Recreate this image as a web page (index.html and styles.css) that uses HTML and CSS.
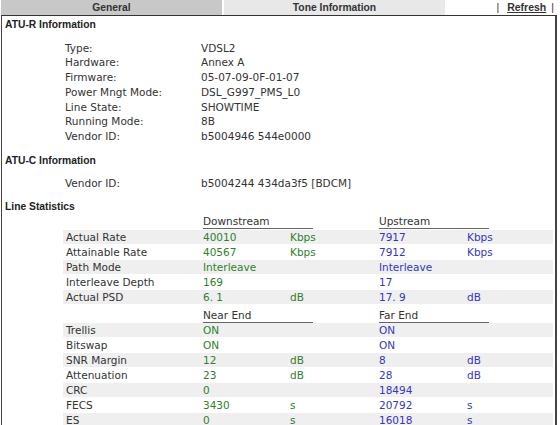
FILE: index.html
```html
<!DOCTYPE html>
<html>
<head>
<meta charset="utf-8">
<link rel="stylesheet" href="styles.css">
</head>
<body>
<div class="tabs">
  <div class="tab tab-active">General</div>
  <div class="tab tab-other">Tone Information</div>
  <div class="links"><span class="sep">|</span><a class="refresh" href="#">Refresh</a><span class="sep">|</span></div>
</div>
<div class="panel">
  <h3 class="sec">ATU-R Information</h3>
  <div class="info">
    <div class="irow"><span class="ilabel">Type:</span><span>VDSL2</span></div>
    <div class="irow"><span class="ilabel">Hardware:</span><span>Annex A</span></div>
    <div class="irow"><span class="ilabel">Firmware:</span><span>05-07-09-0F-01-07</span></div>
    <div class="irow"><span class="ilabel">Power Mngt Mode:</span><span>DSL_G997_PMS_L0</span></div>
    <div class="irow"><span class="ilabel">Line State:</span><span>SHOWTIME</span></div>
    <div class="irow"><span class="ilabel">Running Mode:</span><span>8B</span></div>
    <div class="irow"><span class="ilabel">Vendor ID:</span><span>b5004946 544e0000</span></div>
  </div>
  <h3 class="sec sec-c">ATU-C Information</h3>
  <div class="info info-c">
    <div class="irow"><span class="ilabel">Vendor ID:</span><span>b5004244 434da3f5 [BDCM]</span></div>
  </div>
  <h3 class="sec sec-l">Line Statistics</h3>
  <div class="stats">
    <div class="srow head"><span></span><span class="colh"><span class="uline">Downstream</span></span><span class="colh"><span class="uline">Upstream</span></span></div>
    <div class="srow shade"><span class="slabel">Actual Rate</span><span class="dn">40010</span><span class="dn">Kbps</span><span class="up">7917</span><span class="up">Kbps</span></div>
    <div class="srow"><span class="slabel">Attainable Rate</span><span class="dn">40567</span><span class="dn">Kbps</span><span class="up">7912</span><span class="up">Kbps</span></div>
    <div class="srow shade"><span class="slabel">Path Mode</span><span class="dn">Interleave</span><span class="dn"></span><span class="up">Interleave</span><span class="up"></span></div>
    <div class="srow"><span class="slabel">Interleave Depth</span><span class="dn">169</span><span class="dn"></span><span class="up">17</span><span class="up"></span></div>
    <div class="srow shade"><span class="slabel">Actual PSD</span><span class="dn">6. 1</span><span class="dn">dB</span><span class="up">17. 9</span><span class="up">dB</span></div>
    <div class="srow head head2"><span></span><span class="colh"><span class="uline">Near End</span></span><span class="colh"><span class="uline">Far End</span></span></div>
    <div class="srow shade"><span class="slabel">Trellis</span><span class="dn">ON</span><span class="dn"></span><span class="up">ON</span><span class="up"></span></div>
    <div class="srow"><span class="slabel">Bitswap</span><span class="dn">ON</span><span class="dn"></span><span class="up">ON</span><span class="up"></span></div>
    <div class="srow shade"><span class="slabel">SNR Margin</span><span class="dn">12</span><span class="dn">dB</span><span class="up">8</span><span class="up">dB</span></div>
    <div class="srow"><span class="slabel">Attenuation</span><span class="dn">23</span><span class="dn">dB</span><span class="up">28</span><span class="up">dB</span></div>
    <div class="srow shade"><span class="slabel">CRC</span><span class="dn">0</span><span class="dn"></span><span class="up">18494</span><span class="up"></span></div>
    <div class="srow"><span class="slabel">FECS</span><span class="dn">3430</span><span class="dn">s</span><span class="up">20792</span><span class="up">s</span></div>
    <div class="srow shade"><span class="slabel">ES</span><span class="dn">0</span><span class="dn">s</span><span class="up">16018</span><span class="up">s</span></div>
  </div>
</div>
</body>
</html>
```

FILE: styles.css
```css
html, body {
  margin: 0;
  padding: 0;
  background: #ffffff;
}
body {
  width: 560px;
  height: 425px;
  overflow: hidden;
  font-family: "DejaVu Sans", Verdana, sans-serif;
  font-size: 10.5px;
  color: #333333;
}
.tabs {
  display: flex;
  height: 15px;
  align-items: stretch;
}
.tab {
  width: 221px;
  font-family: "Liberation Sans", Arial, sans-serif;
  font-weight: bold;
  font-size: 10.3px;
  line-height: 15px;
  text-align: center;
  color: #333333;
}
.tab-active {
  margin-left: 1px;
  background: #c8c8c8;
}
.tab-other {
  margin-left: 2px;
  background: #e8e8e8;
}
.links {
  flex: 1;
  display: flex;
  justify-content: flex-end;
  align-items: center;
  padding-right: 6px;
  font-family: "Liberation Sans", Arial, sans-serif;
  font-size: 10.5px;
  line-height: 15px;
  color: #333333;
}
.sep {
  font-weight: normal;
}
.refresh {
  font-weight: bold;
  color: #333333;
  text-decoration: underline;
  margin: 0 5px 0 8px;
}
.panel {
  margin-left: 1px;
  width: 553px;
  border-top: 1px solid #333333;
  border-left: 1px solid #444444;
  border-right: 2px solid #444444;
  padding-top: 2px;
  height: 420px;
}
.sec {
  margin: 0 0 0 3px;
  font-family: "Liberation Sans", Arial, sans-serif;
  font-weight: bold;
  font-size: 10.3px;
  line-height: 14px;
  color: #222222;
}
.sec-c {
  margin-top: 10px;
}
.sec-l {
  margin-top: 9.7px;
}
.info {
  margin: 8.5px 0 0 63px;
}
.info-c {
  margin-top: 7.5px;
}
.irow {
  display: flex;
  height: 14.8px;
  line-height: 14.8px;
  white-space: nowrap;
}
.ilabel {
  width: 136px;
}
.stats {
  margin-left: 61px;
  margin-top: -1px;
  width: 490px;
  display: flex;
  flex-direction: column;
  gap: 1px;
}
.srow {
  display: grid;
  grid-template-columns: 140px 87px 89px 88px 86px;
  height: 14px;
  line-height: 14px;
  white-space: nowrap;
}
.shade {
  background: #efefef;
}
.slabel {
  padding-left: 3px;
}
.dn {
  color: #2f7f2f;
}
.up {
  color: #3636c0;
}
.head {
  height: 16px;
}
.head2 {
  margin-top: 1px;
}
.colh:nth-child(2) {
  grid-column: 2 / span 2;
}
.colh:nth-child(3) {
  grid-column: 4 / span 2;
}
.uline {
  display: inline-block;
  width: 110px;
  margin-top: 3px;
  line-height: 11.5px;
  border-bottom: 1px solid #666666;
  color: #333333;
}
.head2 .uline {
  margin-top: 4px;
}
```
